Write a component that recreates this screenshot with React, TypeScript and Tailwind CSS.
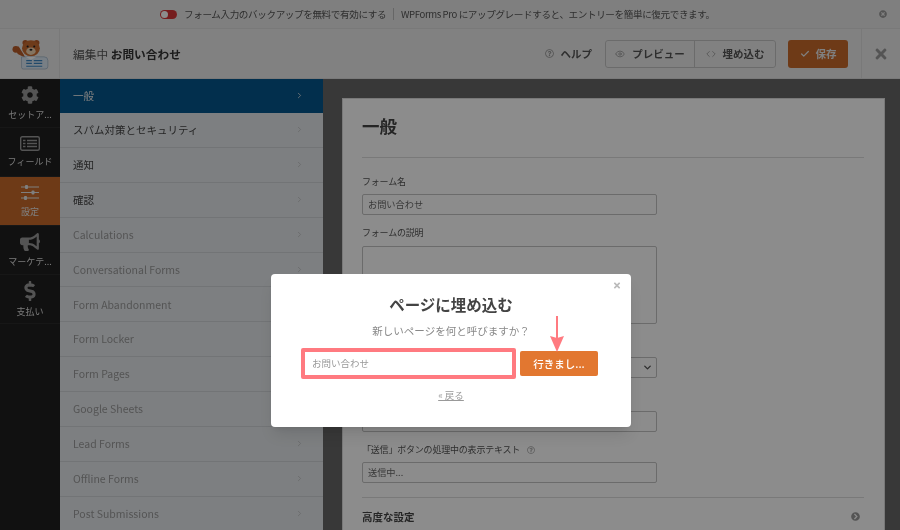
import { ChevronDown, ChevronRight, Code, Eye, Check } from 'lucide-react';
import { FaBullhorn, FaCog, FaDollarSign, FaTimes, FaTimesCircle, FaChevronCircleRight, FaRegQuestionCircle } from 'react-icons/fa';

function FieldsIcon({ className }: { className?: string }) {
  return (
    <svg viewBox="0 0 20 15" className={className}>
      <rect x="0.7" y="0.7" width="18.6" height="13.6" rx="1.5" fill="none" stroke="currentColor" strokeWidth="1.4" />
      <path d="M3 4.5h2.5M7 4.5h10M3 7.5h2.5M7 7.5h10M3 10.5h2.5M7 10.5h10" stroke="currentColor" strokeWidth="1.3" />
    </svg>
  );
}

function SlidersIcon({ className }: { className?: string }) {
  return (
    <svg viewBox="0 0 18 16" className={className}>
      <path d="M0 2.5h18M0 8h18M0 13.5h18" stroke="currentColor" strokeWidth="1" />
      <rect x="4" y="0.5" width="3" height="4" rx="1" fill="currentColor" />
      <rect x="10.5" y="6" width="3" height="4" rx="1" fill="currentColor" />
      <rect x="3" y="11.5" width="3" height="4" rx="1" fill="currentColor" />
    </svg>
  );
}

const rail = [
  { label: 'セットア...', Icon: FaCog, size: 'h-[18px] w-[18px]' },
  { label: 'フィールド', Icon: FieldsIcon, size: 'h-[15px] w-[20px]' },
  { label: '設定', Icon: SlidersIcon, size: 'h-[17px] w-[18px]', active: true },
  { label: 'マーケテ...', Icon: FaBullhorn, size: 'h-[18px] w-[20px]' },
  { label: '支払い', Icon: FaDollarSign, size: 'h-[20px] w-[14px]' },
];

const menu = [
  { label: 'スパム対策とセキュリティ', on: true },
  { label: '通知', on: true },
  { label: '確認', on: true },
  { label: 'Calculations' },
  { label: 'Conversational Forms' },
  { label: 'Form Abandonment' },
  { label: 'Form Locker' },
  { label: 'Form Pages' },
  { label: 'Google Sheets' },
  { label: 'Lead Forms' },
  { label: 'Offline Forms' },
  { label: 'Post Submissions' },
];

function Bear() {
  return (
    <svg viewBox="0 0 40 34" className="h-[32px] w-[38px]">
      <circle cx="15" cy="5" r="3" fill="#b85c28" />
      <circle cx="27" cy="5" r="3" fill="#b85c28" />
      <ellipse cx="21" cy="11" rx="9.5" ry="8.5" fill="#c96c30" />
      <ellipse cx="21" cy="14" rx="5" ry="4" fill="#f0d3b0" />
      <circle cx="17.5" cy="9" r="1.1" fill="#222" />
      <circle cx="24.5" cy="9" r="1.1" fill="#222" />
      <ellipse cx="21" cy="12.5" rx="1.6" ry="1.1" fill="#222" />
      <path d="M7 17l-3-6 4-2 5 8 2 4z" fill="#b85c28" />
      <circle cx="5" cy="12" r="3.6" fill="#b85c28" />
      <path d="M11 20h24a4 4 0 014 4v6a3 3 0 01-3 3H13a2 2 0 01-2-2z" fill="#dbe7f3" stroke="#8aa3b8" strokeWidth="0.6" />
      <path d="M16 24h6M24 24h9M16 27h6M24 27h9M16 30h17" stroke="#3d86c2" strokeWidth="1.2" />
      <path d="M15 20l6 3 6-3z" fill="#fff" />
    </svg>
  );
}

function Field({ label, value, help }: { label?: string; value?: string; help?: boolean }) {
  return (
    <div className="mb-[11px]">
      <div className="mb-[5px] flex h-[14px] items-center gap-[7px] text-[9px] leading-[14px] tracking-[-0.2px] text-[#555]">
        {label}
        {help && <FaRegQuestionCircle className="h-[8px] w-[8px] text-[#aaa]" />}
      </div>
      <div className="flex h-[21px] w-[295px] items-center rounded-[2px] border border-[#c4c4c4] bg-white px-[5px] text-[9.2px] text-[#666]">
        {value}
      </div>
    </div>
  );
}

export default function App() {
  return (
    <div className="relative flex h-[530px] w-[900px] flex-col overflow-hidden bg-[#666] font-['Noto_Sans_CJK_JP',sans-serif] blur-[0.4px]">
      {/* notice bar */}
      <div className="flex h-[28px] shrink-0 items-center bg-[#e8e8e8] pl-[160px] pr-[13px] text-[9.6px] tracking-[-0.4px] text-[#555]">
        <span className="relative mr-[7px] h-[9px] w-[17px] rounded-full bg-[#d63638]">
          <span className="absolute left-[1px] top-[1px] h-[7px] w-[7px] rounded-full bg-white" />
        </span>
        <span>フォーム入力のバックアップを無料で有効にする</span>
        <span className="mx-[7px] h-[12px] w-px bg-[#bbb]" />
        <span>WPForms Pro にアップグレードすると、エントリーを簡単に復元できます。</span>
        <FaTimesCircle className="ml-auto h-[8px] w-[8px] text-[#999]" />
      </div>

      {/* header */}
      <div className="flex h-[51px] shrink-0 items-center border-y border-[#dcdcdc] bg-[#ececec]">
        <div className="flex h-full w-[60px] shrink-0 items-center justify-center border-r border-[#dcdcdc]">
          <Bear />
        </div>
        <div className="pl-[13px] text-[11.7px] text-[#555]">
          編集中 <span className="font-bold text-[#333]">お問い合わせ</span>
        </div>
        <div className="ml-auto flex items-center text-[10.5px] font-bold text-[#555]">
          <FaRegQuestionCircle className="mr-[7px] h-[9px] w-[9px] text-[#999]" />
          ヘルプ
        </div>
        <div className="ml-[13px] flex h-[28px] w-[171px] items-center rounded-[3px] border border-[#c4c4c4] text-[10.5px] font-bold text-[#555]">
          <div className="flex h-full w-[89px] items-center justify-center gap-[7px] border-r border-[#c4c4c4]">
            <Eye className="h-[10px] w-[10px] text-[#999]" />
            プレビュー
          </div>
          <div className="flex flex-1 items-center justify-center gap-[7px]">
            <Code className="h-[10px] w-[10px] text-[#999]" />
            埋め込む
          </div>
        </div>
        <div className="ml-[12px] flex h-[28px] w-[60px] items-center justify-center gap-[6px] rounded-[3px] bg-[#c86a2a] text-[10.5px] font-bold text-[#e8e8e8]">
          <Check className="h-[10px] w-[10px]" strokeWidth={3} />
          保存
        </div>
        <div className="ml-[13px] flex h-full w-[39px] items-center justify-center border-l border-[#dcdcdc]">
          <FaTimes className="h-[16px] w-[14px] text-[#999]" />
        </div>
      </div>

      <div className="flex min-h-0 flex-1">
        {/* icon rail */}
        <div className="w-[60px] shrink-0 bg-[#1f1f1f]">
          {rail.map(({ label, Icon, size, active }) => (
            <div
              key={label}
              className={`flex h-[49px] flex-col items-center justify-center border-b border-[#2a2a2a] text-[9px] leading-[13px] ${active ? 'bg-[#c86a2a] text-[#e8e8e8]' : 'text-[#ddd]'}`}
            >
              <Icon className={`mb-[4px] ${size} ${active ? 'text-[#e8e8e8]' : 'text-[#999]'}`} />
              {label}
            </div>
          ))}
        </div>

        {/* settings menu */}
        <div className="w-[263px] shrink-0 bg-[#e4e8ec]">
          <div className="flex h-[34px] items-center justify-between bg-[#05568c] pb-[1px] pl-[13px] pr-[19px] text-[10.5px] text-[#e8e8e8]">
            一般
            <ChevronRight className="h-[9px] w-[9px]" />
          </div>
          {menu.map((m) => (
            <div
              key={m.label}
              className={`flex h-[34.9px] items-center justify-between border-b border-[#d0d4d8] pl-[13px] pr-[19px] text-[10.5px] ${m.on ? 'text-[#444]' : 'text-[#999]'}`}
            >
              {m.label}
              <ChevronRight className="h-[9px] w-[9px] text-[#bbb]" />
            </div>
          ))}
        </div>

        {/* form panel */}
        <div className="min-w-0 flex-1 pl-[19px] pr-[15px] pt-[19px]">
          <div className="h-[500px] border border-[#ddd] bg-white pl-[19px] pr-[20px]">
            <div className="flex h-[59px] items-center border-b border-[#ddd] pb-[4px] text-[17.5px] font-bold leading-none text-[#444]">
              一般
            </div>
            <div className="pb-[3px] pt-[17px]">
              <Field label="フォーム名" value="お問い合わせ" />
              <div className="mb-[14px]">
                <div className="mb-[6px] h-[14px] text-[9px] leading-[14px] tracking-[-0.2px] text-[#555]">フォームの説明</div>
                <div className="h-[78px] w-[295px] rounded-[2px] border border-[#c4c4c4] bg-white" />
              </div>
              <div className="mb-[14px]">
                <div className="mb-[5px] h-[14px]" />
                <div className="flex h-[21px] w-[295px] items-center justify-end rounded-[2px] border border-[#c4c4c4] bg-white pr-[3px]">
                  <ChevronDown className="h-[11px] w-[11px] text-[#555]" strokeWidth={3} />
                </div>
              </div>
              <Field />
              <Field label="「送信」ボタンの処理中の表示テキスト" value="送信中..." help />
            </div>
            <div className="flex h-[38px] items-center justify-between border-t border-[#ddd] pr-[4px] text-[10.5px] font-bold text-[#444]">
              高度な設定
              <FaChevronCircleRight className="h-[9px] w-[9px] text-[#999]" />
            </div>
          </div>
        </div>
      </div>

      {/* dim */}
      <div className="absolute inset-0 bg-black/45" />

      {/* modal */}
      <div className="absolute left-[271px] top-[274px] flex h-[153px] w-[360px] flex-col items-center rounded-[4px] bg-white pt-[20px] shadow-lg">
        <FaTimes className="absolute right-[10px] top-[7px] h-[9px] w-[8px] text-[#bbb]" />
        <div className="mt-[-1px] text-[15.5px] font-bold leading-[22px] text-[#444]">ページに埋め込む</div>
        <div className="mt-[8px] text-[10.5px] leading-[16px] text-[#888]">新しいページを何と呼びますか？</div>
        <div className="ml-[30px] mt-[9px] flex w-[297px] items-center gap-[4px] self-start">
          <div className="flex h-[31px] flex-1 items-center rounded-[2px] border-[4px] border-[#ff7a80] bg-white pl-[7px] text-[9.5px] text-[#999]">
            お問い合わせ
          </div>
          <div className="flex h-[25px] w-[78px] items-center justify-center rounded-[2px] bg-[#e27730] text-[10.5px] font-medium text-white">
            行きまし...
          </div>
        </div>
        <div className="mt-[9px] text-[9.5px] leading-[14px] text-[#999] underline">« 戻る</div>
        <svg viewBox="0 0 14 36" className="absolute left-[279px] top-[42px] h-[36px] w-[14px]">
          <path d="M7 0v22" stroke="#ff7a80" strokeWidth="2" />
          <path d="M0 20l7 2 7-2-7 16z" fill="#ff7a80" />
        </svg>
      </div>
    </div>
  );
}
